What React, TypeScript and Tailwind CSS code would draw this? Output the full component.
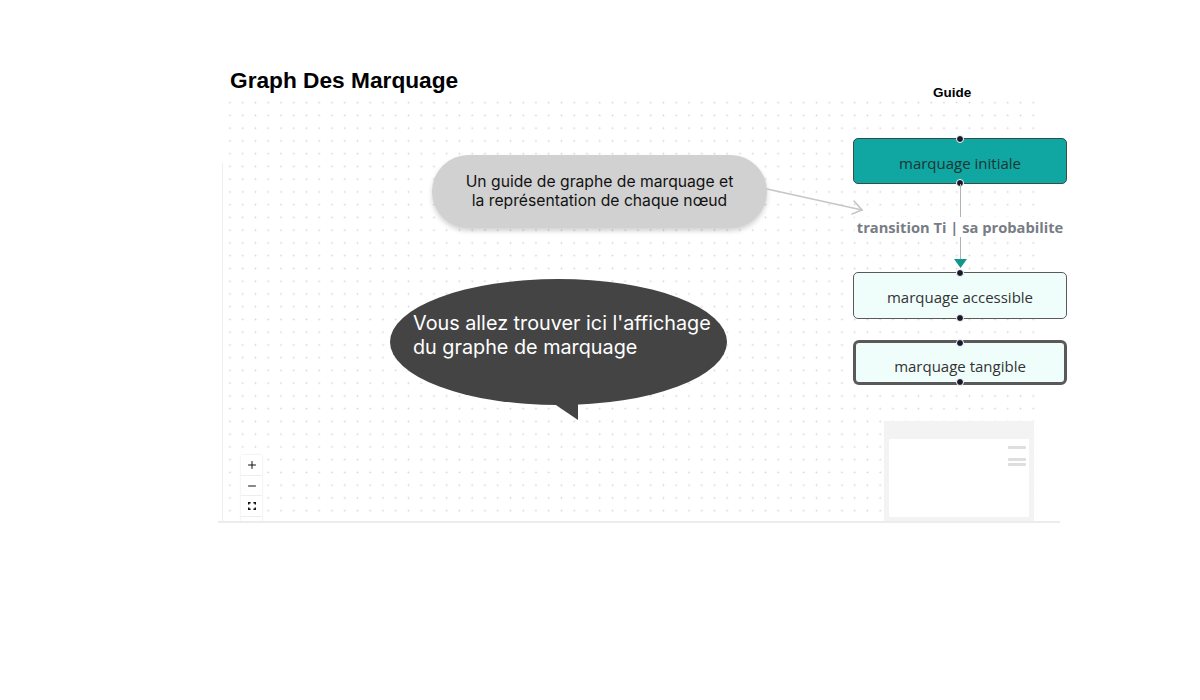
import { Plus, Minus } from "lucide-react";

const Handle = ({ top }: { top: boolean }) => (
    <div
        className={
            top
                ? "absolute left-1/2 -top-[4px] -translate-x-1/2 w-[8px] h-[8px] rounded-full bg-[#1a192b] border border-white"
                : "absolute left-1/2 -bottom-[4px] -translate-x-1/2 w-[8px] h-[8px] rounded-full bg-[#1a192b] border border-white"
        }
    />
);

const FitIcon = () => (
    <svg width="8" height="8" viewBox="0 0 8 8" fill="none" stroke="#111" strokeWidth="1.4">
        <path d="M0.7 2.6V0.7H2.6M5.4 0.7H7.3V2.6M7.3 5.4V7.3H5.4M2.6 7.3H0.7V5.4" />
    </svg>
);

export default function App() {
    return (
        <div className="min-h-[700px] bg-white pt-[67px] font-['Liberation_Sans',Arial,sans-serif]">
            <div className="relative ml-[218px] w-[842px]">
                <h1 className="h-[29px] pl-[12px] text-[22.7px] leading-[26px] font-bold text-black">
                    Graph Des Marquage
                </h1>
                <div className="absolute left-[715px] top-[18px] text-[13.5px] leading-[15px] font-bold text-black z-10">
                    Guide
                </div>

                <div className="relative ml-[4px] w-[852px] h-[425px] overflow-hidden">
                    {/* dotted background */}
                    <div className="absolute inset-y-0 left-0 right-[34px] pointer-events-none bg-[radial-gradient(circle,#d6d6d6_0.8px,transparent_1.1px)] bg-[size:12.75px_12.75px] bg-[position:1.6px_0.3px]" />
                    <div className="absolute left-0 top-[67px] bottom-0 w-px bg-[#efefef]" />

                    {/* guide pill */}
                    <div className="absolute left-[210px] top-[59px] w-[335px] h-[73px] rounded-full bg-[#d1d1d1] shadow-[0_3px_5px_rgba(0,0,0,0.18)] flex items-center justify-center text-center font-['Inter',sans-serif] text-[15.7px] leading-[18.5px] text-[#111]">
                        <p>
                            Un guide de graphe de marquage et
                            <br />
                            la représentation de chaque nœud
                        </p>
                    </div>
                    <svg className="absolute left-[544px] top-[90px]" width="100" height="32" viewBox="0 0 100 32" fill="none" stroke="#c6c6c6" strokeWidth="1.6" strokeLinecap="round">
                        <path d="M1 3L96 24" />
                        <path d="M88 15L96 24L86 28" />
                    </svg>

                    {/* dark bubble */}
                    <div className="absolute left-[168px] top-[183px] w-[337px] h-[126px] rounded-[50%] bg-[#444444] pl-[23px] pt-[32px] font-['Inter',sans-serif] text-[19.8px] leading-[24px] text-white">
                        <p>
                            Vous allez trouver ici l'affichage
                            <br />
                            du graphe de marquage
                        </p>
                    </div>
                    <div className="absolute left-[328px] top-[305px] w-[28px] h-[19px] bg-[#444444] [clip-path:polygon(0_0,100%_0,100%_100%)]" />

                    {/* nodes */}
                    <div className="absolute left-[631px] top-[42px] w-[214px] h-[46px] rounded-[5px] border border-[#3a4b4b] bg-[#10a6a1] flex items-center justify-center pt-[4px] font-['Open_Sans',sans-serif] text-[15px] text-[#1b3535]">
                        marquage initiale
                        <Handle top />
                        <Handle top={false} />
                    </div>

                    <div className="absolute left-[737.5px] top-[88px] w-px h-[75px] bg-[#b1b1b7]" />
                    <div className="absolute left-[738px] top-[121px] -translate-x-1/2 bg-white px-[2px] whitespace-nowrap font-['Open_Sans',sans-serif] font-bold text-[14.7px] leading-[20px] text-[#777c85]">
                        transition Ti | sa probabilite
                    </div>
                    <svg className="absolute left-[732px] top-[163px]" width="13" height="9" viewBox="0 0 13 9">
                        <polygon points="0,0 13,0 6.5,9" fill="#12988a" />
                    </svg>

                    <div className="absolute left-[631px] top-[176px] w-[214px] h-[47px] rounded-[5px] border border-[#5a5a5a] bg-[#effdfb] flex items-center justify-center pt-[4px] font-['Open_Sans',sans-serif] text-[15px] text-[#333333]">
                        marquage accessible
                        <Handle top />
                        <Handle top={false} />
                    </div>

                    <div className="absolute left-[631px] top-[244px] w-[214px] h-[45px] rounded-[6px] border-[3px] border-[#595959] bg-[#effdfb] flex items-center justify-center pt-[7px] font-['Open_Sans',sans-serif] text-[15px] text-[#333333]">
                        marquage tangible
                        <Handle top />
                        <Handle top={false} />
                    </div>

                    {/* controls */}
                    <div className="absolute left-[19px] top-[359px] w-[21px] bg-white shadow-[0_0_2px_rgba(0,0,0,0.12)] flex flex-col">
                        <button className="h-[21px] flex items-center justify-center border-b border-[#eeeeee] text-[#111]">
                            <Plus size={12} strokeWidth={2} />
                        </button>
                        <button className="h-[20px] flex items-center justify-center border-b border-[#eeeeee] text-[#111]">
                            <Minus size={12} strokeWidth={2} />
                        </button>
                        <button className="h-[21px] flex items-center justify-center border-b border-[#eeeeee]">
                            <FitIcon />
                        </button>
                        <button className="h-[20px]" />
                    </div>

                    {/* minimap */}
                    <div className="absolute left-[662px] top-[325px] w-[150px] h-[110px] bg-[#f3f3f3]">
                        <div className="relative ml-[5px] mt-[18px] w-[140px] h-[78px] bg-white">
                            <div className="absolute left-[119px] top-[7px] w-[18px] h-[3px] rounded-[1px] bg-[#dedede]" />
                            <div className="absolute left-[119px] top-[19px] w-[18px] h-[3px] rounded-[1px] bg-[#dedede]" />
                            <div className="absolute left-[119px] top-[24px] w-[18px] h-[3px] rounded-[1px] bg-[#dedede]" />
                        </div>
                    </div>
                </div>
                <div className="h-[2px] bg-[#ececec]" />
            </div>
        </div>
    );
}
